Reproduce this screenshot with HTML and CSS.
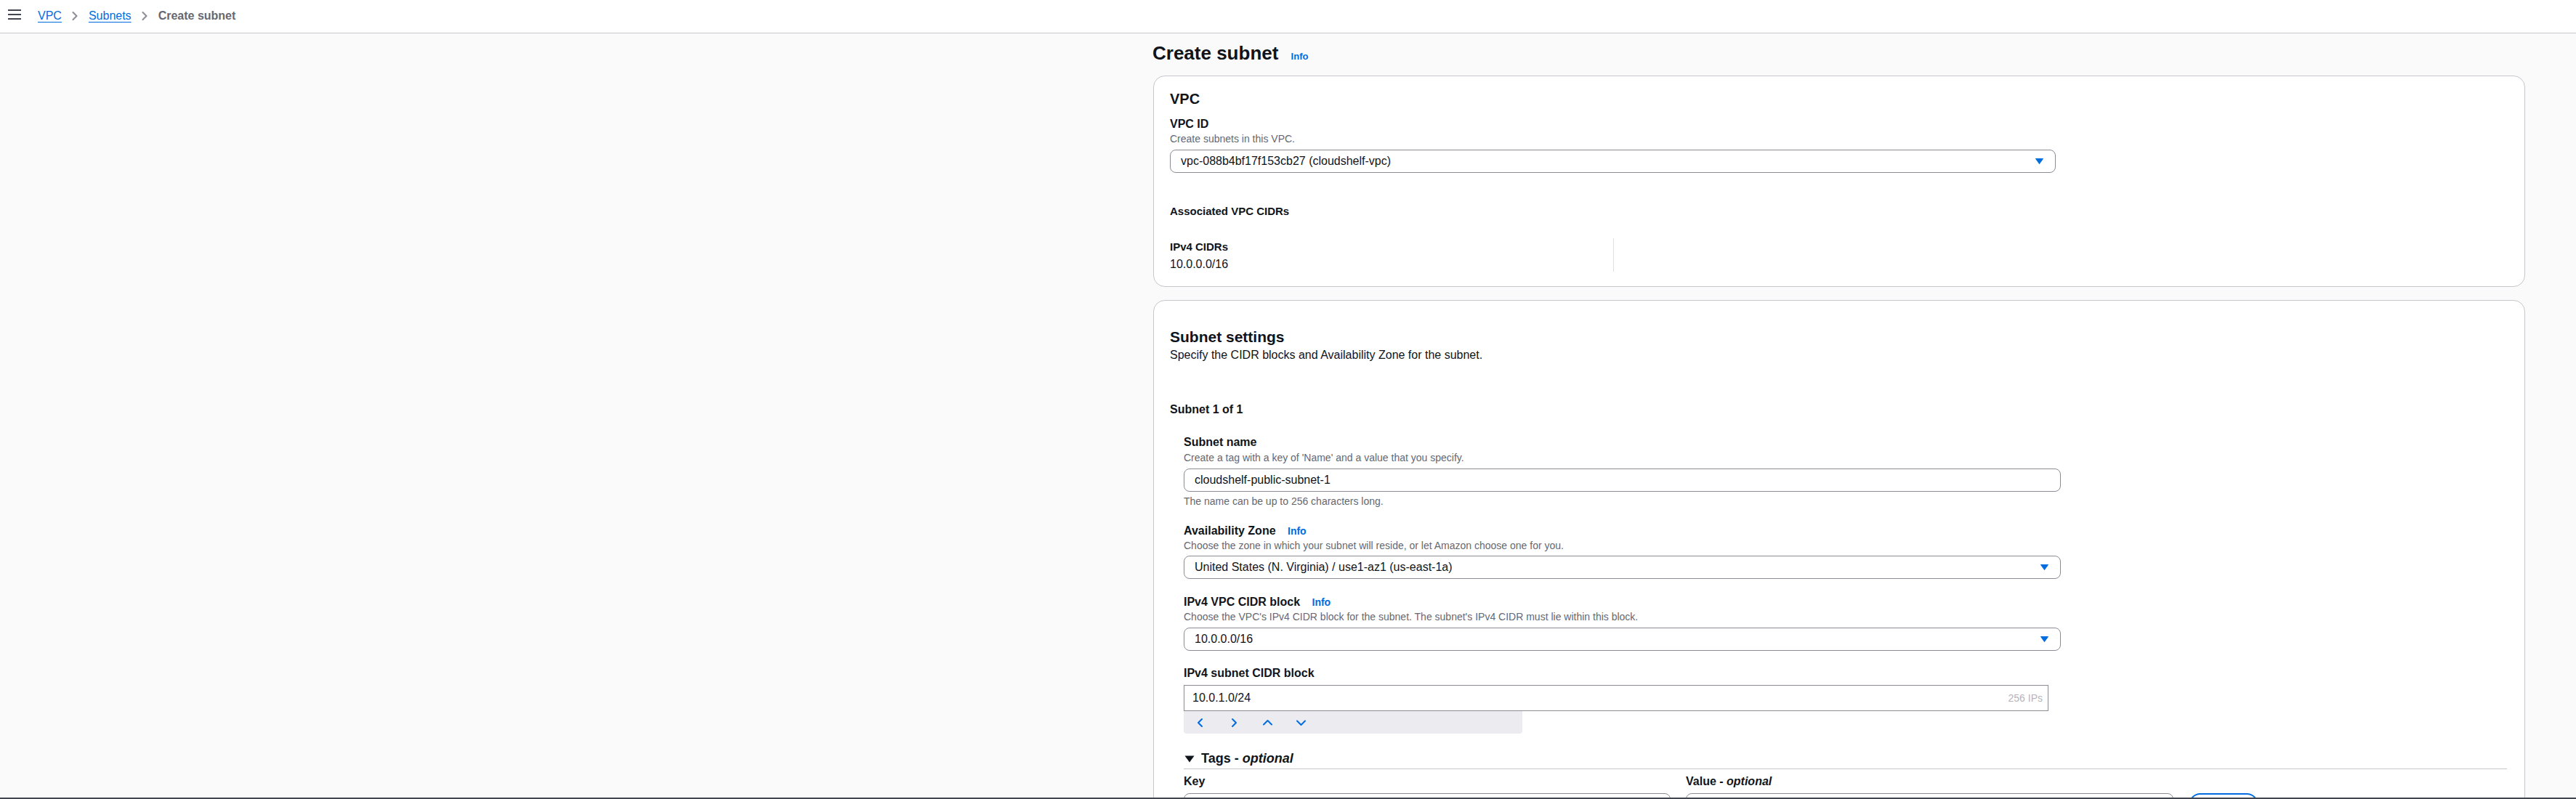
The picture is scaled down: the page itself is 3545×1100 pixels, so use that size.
FILE: index.html
```html
<!DOCTYPE html>
<html lang="en">
<head>
<meta charset="utf-8">
<title>Create subnet | VPC</title>
<link rel="stylesheet" href="styles.css">
</head>
<body>
<header class="topbar">
  <button class="menu" aria-label="Open navigation">
    <svg width="18" height="14" viewBox="0 0 18 14"><rect x="0" y="0" width="18" height="2" fill="#424650"/><rect x="0" y="6" width="18" height="2" fill="#424650"/><rect x="0" y="12" width="18" height="2" fill="#424650"/></svg>
  </button>
  <nav class="crumbs" aria-label="Breadcrumbs">
    <a href="#">VPC</a>
    <svg class="crumb-sep" width="8" height="12" viewBox="0 0 8 12"><path d="M1.5 1 L6.5 6 L1.5 11" fill="none" stroke="#8c8c94" stroke-width="2" stroke-linecap="round" stroke-linejoin="round"/></svg>
    <a href="#">Subnets</a>
    <svg class="crumb-sep" width="8" height="12" viewBox="0 0 8 12"><path d="M1.5 1 L6.5 6 L1.5 11" fill="none" stroke="#8c8c94" stroke-width="2" stroke-linecap="round" stroke-linejoin="round"/></svg>
    <span class="current">Create subnet</span>
  </nav>
</header>

<div class="layout">
  <div class="nav-space"></div>
  <main class="content">
    <h1 class="page-title">Create subnet <a class="info" href="#">Info</a></h1>

    <section class="card card-vpc">
      <h2>VPC</h2>
      <div class="field f-vpcid">
        <span class="label">VPC ID</span>
        <p class="desc">Create subnets in this VPC.</p>
        <div class="select w-vpc c-6">
          <span>vpc-088b4bf17f153cb27 (cloudshelf-vpc)</span>
          <svg class="caret" width="11" height="8" viewBox="0 0 11 8"><path d="M0.5 0.5 H10.5 L5.5 7.5 Z" fill="#006ce0" stroke="#006ce0" stroke-linejoin="round"/></svg>
        </div>
      </div>
      <h3 class="sub">Associated VPC CIDRs</h3>
      <div class="kv">
        <div class="kv-col">
          <div class="kv-label">IPv4 CIDRs</div>
          <div class="kv-value">10.0.0.0/16</div>
        </div>
        <div class="kv-col kv-divided"></div>
      </div>
    </section>

    <section class="card card-settings">
      <h2>Subnet settings</h2>
      <p class="header-desc">Specify the CIDR blocks and Availability Zone for the subnet.</p>
      <h3 class="subnet-count">Subnet 1 of 1</h3>

      <div class="subnet-body">
        <div class="field f-name">
          <span class="label">Subnet name</span>
          <p class="desc d-2">Create a tag with a key of 'Name' and a value that you specify.</p>
          <div class="input w-field c-6">cloudshelf-public-subnet-1</div>
          <p class="desc d-4">The name can be up to 256 characters long.</p>
        </div>

        <div class="field f-next">
          <span class="label">Availability Zone <a class="info" href="#">Info</a></span>
          <p class="desc d-1">Choose the zone in which your subnet will reside, or let Amazon choose one for you.</p>
          <div class="select w-field c-5">
            <span>United States (N. Virginia) / use1-az1 (us-east-1a)</span>
            <svg class="caret" width="11" height="8" viewBox="0 0 11 8"><path d="M0.5 0.5 H10.5 L5.5 7.5 Z" fill="#006ce0" stroke="#006ce0" stroke-linejoin="round"/></svg>
          </div>
        </div>

        <div class="field f-next">
          <span class="label">IPv4 VPC CIDR block <a class="info" href="#">Info</a></span>
          <p class="desc d-1">Choose the VPC's IPv4 CIDR block for the subnet. The subnet's IPv4 CIDR must lie within this block.</p>
          <div class="select w-field c-6">
            <span>10.0.0.0/16</span>
            <svg class="caret" width="11" height="8" viewBox="0 0 11 8"><path d="M0.5 0.5 H10.5 L5.5 7.5 Z" fill="#006ce0" stroke="#006ce0" stroke-linejoin="round"/></svg>
          </div>
        </div>

        <div class="field f-cidr">
          <span class="label">IPv4 subnet CIDR block</span>
          <div class="cidr-input c-6">
            <span>10.0.1.0/24</span>
            <span class="suffix">256 IPs</span>
          </div>
          <div class="stepper">
            <svg width="14" height="14" viewBox="0 0 14 14"><path d="M9 2 L4 7 L9 12" fill="none" stroke="#006ce0" stroke-width="2" stroke-linecap="round" stroke-linejoin="round"/></svg>
            <svg width="14" height="14" viewBox="0 0 14 14"><path d="M5 2 L10 7 L5 12" fill="none" stroke="#006ce0" stroke-width="2" stroke-linecap="round" stroke-linejoin="round"/></svg>
            <svg width="14" height="14" viewBox="0 0 14 14"><path d="M2 9.5 L7.5 4 L13 9.5" fill="none" stroke="#006ce0" stroke-width="2" stroke-linecap="round" stroke-linejoin="round"/></svg>
            <svg width="14" height="14" viewBox="0 0 14 14"><path d="M2 4.5 L7.5 10 L13 4.5" fill="none" stroke="#006ce0" stroke-width="2" stroke-linecap="round" stroke-linejoin="round"/></svg>
          </div>
        </div>

        <div class="tags">
          <h3 class="tags-title">
            <svg width="14" height="10" viewBox="0 0 14 10"><path d="M0.5 0.5 H13.5 L7 9.5 Z" fill="#0f141a"/></svg>
            <span>Tags - <i>optional</i></span>
          </h3>
          <div class="tag-grid">
            <span class="label">Key</span>
            <span class="label">Value - <i>optional</i></span>
            <span></span>
            <div class="input tag-input"></div>
            <div class="input tag-input"></div>
            <button class="btn-remove">Remove</button>
          </div>
        </div>
      </div>
    </section>
  </main>
</div>
<div class="footer-line"></div>
</body>
</html>
```

FILE: styles.css
```css
* { box-sizing: border-box; }

html, body { margin: 0; padding: 0; }

body {
  background: #fafafa;
  font-family: "Liberation Sans", Arial, sans-serif;
  color: #0f141a;
  overflow: hidden;
}

a { color: #006ce0; text-decoration: none; }

/* Top bar */
.topbar {
  height: 46px;
  background: #fff;
  border-bottom: 1px solid #c6c6cd;
  display: flex;
  align-items: center;
  padding: 0 0 2px 11px;
}

.menu {
  border: 0;
  background: transparent;
  padding: 0;
  margin: 0 0 3px 0;
  display: flex;
}

.crumbs {
  display: flex;
  align-items: center;
  margin-left: 23px;
  font-size: 16px;
  line-height: 20px;
}

.crumbs a {
  text-decoration: underline;
  text-underline-offset: 3px;
  text-decoration-thickness: 1px;
}

.crumb-sep { margin: 0 15px 0 14px; }

.crumbs .current { color: #656871; font-weight: 700; }

/* Layout */
.layout {
  display: grid;
  grid-template-columns: 1587px 1888px;
}

.content { grid-column: 2; }

.page-title {
  margin: 11px 0 15px -1px;
  font-size: 26px;
  line-height: 32px;
  font-weight: 700;
}

.info {
  font-size: 13px;
  line-height: 14px;
  font-weight: 700;
  margin-left: 10px;
}

.label .info { font-size: 14px; line-height: 14px; margin-left: 12px; }

/* Containers */
.card {
  background: #fff;
  border: 1px solid #c6c6cd;
  border-radius: 16px;
  padding: 19px 22px 20px;
}

.card-settings {
  margin-top: 18px;
  padding-top: 37px;
  padding-bottom: 60px;
}

.card h2 {
  margin: 0;
  font-size: 20px;
  line-height: 24px;
  font-weight: 700;
}

.card-settings h2 { font-size: 21px; line-height: 26px; }

.header-desc {
  margin: 2px 0 0;
  font-size: 16px;
  line-height: 20px;
  color: #0f141a;
}

.subnet-count {
  margin: 55px 0 0;
  font-size: 16px;
  line-height: 20px;
  font-weight: 700;
}

/* Form fields */
.label {
  display: block;
  font-size: 16px;
  line-height: 20px;
  font-weight: 700;
}

.desc {
  margin: 1px 0 0;
  font-size: 14px;
  line-height: 18px;
  color: #656871;
}
.d-1 { margin-top: 1px; }
.d-2 { margin-top: 2px; }
.d-4 { margin-top: 4px; }

.f-vpcid { margin-top: 13px; }
.f-name { margin-top: 25px; }
.f-next { margin-top: 22px; }
.f-cidr { margin-top: 21px; }

.c-5 { margin-top: 5px; }
.c-6 { margin-top: 6px; }

.select, .input {
  height: 32px;
  border: 1px solid #8c8c94;
  border-radius: 8px;
  background: #fff;
  display: flex;
  align-items: center;
  justify-content: space-between;
  padding: 0 16px 0 14px;
  font-size: 16px;
  line-height: 20px;
  color: #0f141a;
}

.caret { flex: none; }

.w-vpc { width: 1219px; }
.w-field { width: 1207px; }

.cidr-input {
  width: 1190px;
  height: 36px;
  border: 1px solid #8c8c94;
  background: #fff;
  display: flex;
  align-items: center;
  justify-content: space-between;
  padding: 0 7px 0 11px;
  font-size: 16px;
  color: #0f141a;
}

.suffix { font-size: 14px; color: #b4b4bb; }

.stepper {
  width: 466px;
  height: 31px;
  background: #ebebf0;
  border-radius: 0 0 4px 4px;
  display: flex;
  align-items: center;
  gap: 32px;
  padding-left: 16px;
}

.stepper svg { display: block; }

/* VPC key/value */
.sub {
  margin: 43px 0 0;
  font-size: 15px;
  line-height: 20px;
  font-weight: 700;
}

.kv {
  margin-top: 27px;
  display: grid;
  grid-template-columns: 610px 610px;
}

.kv-col { padding-top: 2px; }

.kv-divided { border-left: 1px solid #dedee3; }

.kv-label { font-size: 15px; line-height: 20px; font-weight: 700; }

.kv-value { margin-top: 4px; font-size: 16px; line-height: 20px; }

/* Subnet body */
.subnet-body { padding: 0 2px 0 19px; }

.tags { margin-top: 23px; }

.tags-title {
  margin: 0;
  font-size: 18px;
  line-height: 22px;
  font-weight: 700;
  display: flex;
  align-items: center;
  gap: 9px;
  padding-left: 1px;
  padding-bottom: 3px;
  border-bottom: 1px solid #c6c6cd;
}

.tags-title svg { margin-top: 2px; }

.tag-grid {
  margin-top: 7px;
  display: grid;
  grid-template-columns: 670px 671px 96px;
  column-gap: 21px;
  row-gap: 6px;
}

.tag-input { height: 32px; }

.btn-remove {
  height: 32px;
  border: 2px solid #006ce0;
  border-radius: 20px;
  background: #fff;
  color: #006ce0;
  font-family: inherit;
  font-size: 16px;
  font-weight: 700;
}

.footer-line {
  position: fixed;
  left: 0;
  right: 0;
  bottom: 0;
  height: 2px;
  background: #424650;
}
```
